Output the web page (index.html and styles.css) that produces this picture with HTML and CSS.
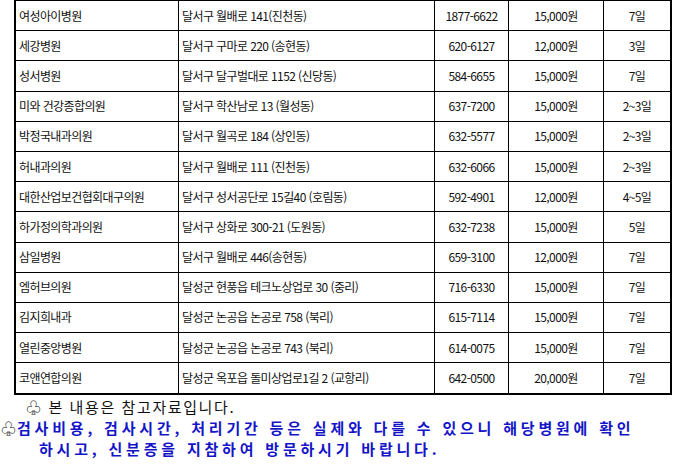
FILE: index.html
```html
<!DOCTYPE html>
<html lang="ko">
<head>
<meta charset="utf-8">
<link rel="stylesheet" href="styles.css">
</head>
<body>
<table class="list">
  <colgroup>
    <col class="c1"><col class="c2"><col class="c3"><col class="c4"><col class="c5">
  </colgroup>
  <tbody>
    <tr><td>여성아이병원</td><td>달서구 월배로 141(진천동)</td><td class="ctr">1877-6622</td><td class="ctr">15,000원</td><td class="ctr">7일</td></tr>
    <tr><td>세강병원</td><td>달서구 구마로 220 (송현동)</td><td class="ctr">620-6127</td><td class="ctr">12,000원</td><td class="ctr">3일</td></tr>
    <tr><td>성서병원</td><td>달서구 달구벌대로 1152 (신당동)</td><td class="ctr">584-6655</td><td class="ctr">15,000원</td><td class="ctr">7일</td></tr>
    <tr><td>미와 건강종합의원</td><td>달서구 학산남로 13 (월성동)</td><td class="ctr">637-7200</td><td class="ctr">15,000원</td><td class="ctr">2~3일</td></tr>
    <tr><td>박정국내과의원</td><td>달서구 월곡로 184 (상인동)</td><td class="ctr">632-5577</td><td class="ctr">15,000원</td><td class="ctr">2~3일</td></tr>
    <tr><td>허내과의원</td><td>달서구 월배로 111 (진천동)</td><td class="ctr">632-6066</td><td class="ctr">15,000원</td><td class="ctr">2~3일</td></tr>
    <tr><td>대한산업보건협회대구의원</td><td>달서구 성서공단로 15길40 (호림동)</td><td class="ctr">592-4901</td><td class="ctr">12,000원</td><td class="ctr">4~5일</td></tr>
    <tr><td>하가정의학과의원</td><td>달서구 상화로 300-21 (도원동)</td><td class="ctr">632-7238</td><td class="ctr">15,000원</td><td class="ctr">5일</td></tr>
    <tr><td>삼일병원</td><td>달서구 월배로 446(송현동)</td><td class="ctr">659-3100</td><td class="ctr">12,000원</td><td class="ctr">7일</td></tr>
    <tr><td>엠허브의원</td><td>달성군 현풍읍 테크노상업로 30 (중리)</td><td class="ctr">716-6330</td><td class="ctr">15,000원</td><td class="ctr">7일</td></tr>
    <tr><td>김지희내과</td><td>달성군 논공읍 논공로 758 (북리)</td><td class="ctr">615-7114</td><td class="ctr">15,000원</td><td class="ctr">7일</td></tr>
    <tr><td>열린중앙병원</td><td>달성군 논공읍 논공로 743 (북리)</td><td class="ctr">614-0075</td><td class="ctr">15,000원</td><td class="ctr">7일</td></tr>
    <tr><td>코앤연합의원</td><td>달성군 옥포읍 돌미상업로1길 2 (교항리)</td><td class="ctr">642-0500</td><td class="ctr">20,000원</td><td class="ctr">7일</td></tr>
  </tbody>
</table>
<div class="notes">
  <p class="note-ref">♧ 본 내용은 참고자료입니다.</p>
  <p class="note-warn"><span class="mark">♧</span>검사비용, 검사시간, 처리기간 등은 실제와 다를 수 있으니 해당병원에 확인</p>
  <p class="note-warn cont">하시고, 신분증을 지참하여 방문하시기 바랍니다.</p>
</div>
</body>
</html>
```

FILE: styles.css
```css
html, body {
  margin: 0;
  padding: 0;
  background: #ffffff;
}

body {
  font-family: "Noto Sans CJK KR", "Noto Sans", sans-serif;
  color: #000000;
}

.list {
  margin-left: 14px;
  width: 658px;
  table-layout: fixed;
  border-collapse: separate;
  border-spacing: 0;
  border-top: 1px solid #000;
  border-left: 2px solid #000;
  border-right: 2px solid #000;
  border-bottom: 2px solid #000;
}

.c1 { width: 163px; }
.c2 { width: 256px; }
.c3 { width: 74px; }
.c4 { width: 95px; }
.c5 { width: 66px; }

.list td {
  height: 30.2px;
  padding: 0 3px;
  box-sizing: border-box;
  border-right: 1px solid #000;
  border-bottom: 1px solid #000;
  font-size: 12px;
  letter-spacing: -0.6px;
  line-height: 14px;
  white-space: nowrap;
  overflow: hidden;
  vertical-align: middle;
  color: #111;
}

.list td:last-child {
  border-right: none;
}

.list tr:last-child td {
  border-bottom: none;
}

.list td.ctr {
  text-align: center;
}

.notes {
  margin-top: 2px;
}

.notes p {
  margin: 0;
  white-space: nowrap;
}

.note-ref {
  padding-left: 26px;
  font-size: 15px;
  line-height: 20px;
  letter-spacing: 1.6px;
  color: #111;
}

.note-warn {
  padding-left: 1px;
  font-size: 15px;
  line-height: 21px;
  font-weight: bold;
  letter-spacing: 3.8px;
  color: #1515c8;
}

.note-warn .mark {
  font-weight: normal;
  color: #111;
  letter-spacing: 1px;
}

.note-warn.cont {
  padding-left: 39px;
}
```
